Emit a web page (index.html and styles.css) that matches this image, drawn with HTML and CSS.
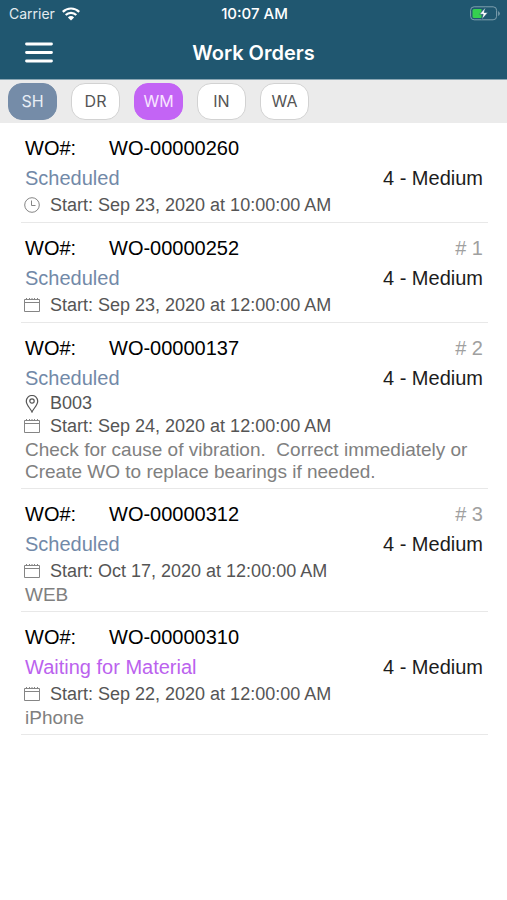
FILE: index.html
```html
<!DOCTYPE html>
<html lang="en">
<head>
<meta charset="utf-8">
<meta name="viewport" content="width=device-width, initial-scale=1">
<title>Work Orders</title>
<link rel="stylesheet" href="styles.css">
</head>
<body>
<svg class="defs" aria-hidden="true">
  <symbol id="calendar" viewBox="0 0 16 16"><path d="M.5 2.500h15v12H.5zM.5 5.500h15" fill="none" stroke="currentColor"/><path d="M2.500 1v2M5.500 1v2M8 1v2M10.500 1v2M13.500 1v2" stroke="currentColor"/></symbol>
  <symbol id="clock" viewBox="0 0 16 16"><circle cx="8" cy="8" r="7.300" fill="none" stroke="currentColor"/><path d="M7.500 3.500v5h4" fill="none" stroke="currentColor"/></symbol>
  <symbol id="pin" viewBox="0 0 16 18"><path d="M8 17C6.500 13.500 2.300 10 2.300 6.200a5.700 5.700 0 0 1 11.400 0C13.700 10 9.500 13.500 8 17z" fill="none" stroke="currentColor" stroke-width="1.200"/><circle cx="8" cy="6" r="2.200" fill="none" stroke="currentColor" stroke-width="1.200"/></symbol>
</svg>
<header class="top">
  <div class="status-bar">
    <span class="carrier">Carrier
      <svg class="wifi" viewBox="0 0 18 14" aria-hidden="true"><g fill="none" stroke="#fff" stroke-width="2.200"><path d="M.8 4.900a11.600 11.600 0 0 1 16.400 0"/><path d="M3.700 8a7.500 7.500 0 0 1 10.600 0"/></g><path d="M9 13.600 5.900 10.400a4.400 4.400 0 0 1 6.200 0z" fill="#fff"/></svg>
    </span>
    <span class="clock">10:07 AM</span>
    <svg class="battery" viewBox="0 0 30 15" aria-hidden="true"><rect x=".6" y=".8" width="26" height="13" rx="3.500" fill="none" stroke="#7fa0af"/><path d="M28.200 5v5q1.600-1 1.600-2.500T28.200 5z" fill="#7fa0af"/><path d="M4 3h7.500v9H4q-1.500 0-1.500-1.500v-6Q2.500 3 4 3z" fill="#35d04f"/><path d="M15.500 1.500 9.500 8.300h3.700L11.800 13.500l6-7h-3.700z" fill="#fff" stroke="#205770" stroke-width=".6"/></svg>
  </div>
  <div class="nav-bar">
    <button class="menu" type="button" aria-label="Menu"><svg viewBox="0 0 28 22" aria-hidden="true"><path d="M1.500 2h25M1.500 10.500h25M1.500 19h25" stroke="#fff" stroke-width="2.800" stroke-linecap="round"/></svg></button>
    <h1 class="title">Work Orders</h1>
  </div>
</header>
<nav class="filters" aria-label="Status filters">
  <button class="chip scheduled-on" type="button" aria-pressed="true">SH</button>
  <button class="chip" type="button" aria-pressed="false">DR</button>
  <button class="chip waiting-on" type="button" aria-pressed="true">WM</button>
  <button class="chip" type="button" aria-pressed="false">IN</button>
  <button class="chip" type="button" aria-pressed="false">WA</button>
</nav>
<main>
  <ul class="orders">
    <li class="order">
      <div class="line"><span class="label">WO#:</span><span>WO-00000260</span></div>
      <div class="line"><span class="scheduled">Scheduled</span><span class="end priority">4 - Medium</span></div>
      <div class="meta"><svg class="icon" aria-hidden="true"><use href="#clock"/></svg>Start: Sep 23, 2020 at 10:00:00 AM</div>
    </li>
    <li class="order">
      <div class="line"><span class="label">WO#:</span><span>WO-00000252</span><span class="end rank"># 1</span></div>
      <div class="line"><span class="scheduled">Scheduled</span><span class="end priority">4 - Medium</span></div>
      <div class="meta"><svg class="icon" aria-hidden="true"><use href="#calendar"/></svg>Start: Sep 23, 2020 at 12:00:00 AM</div>
    </li>
    <li class="order">
      <div class="line"><span class="label">WO#:</span><span>WO-00000137</span><span class="end rank"># 2</span></div>
      <div class="line"><span class="scheduled">Scheduled</span><span class="end priority">4 - Medium</span></div>
      <div class="meta place"><svg class="icon pin" aria-hidden="true"><use href="#pin"/></svg>B003</div>
      <div class="meta"><svg class="icon" aria-hidden="true"><use href="#calendar"/></svg>Start: Sep 24, 2020 at 12:00:00 AM</div>
      <p class="note">Check for cause of vibration.&nbsp; Correct immediately or Create WO to replace bearings if needed.</p>
    </li>
    <li class="order">
      <div class="line"><span class="label">WO#:</span><span>WO-00000312</span><span class="end rank"># 3</span></div>
      <div class="line"><span class="scheduled">Scheduled</span><span class="end priority">4 - Medium</span></div>
      <div class="meta"><svg class="icon" aria-hidden="true"><use href="#calendar"/></svg>Start: Oct 17, 2020 at 12:00:00 AM</div>
      <p class="note">WEB</p>
    </li>
    <li class="order">
      <div class="line"><span class="label">WO#:</span><span>WO-00000310</span></div>
      <div class="line"><span class="waiting">Waiting for Material</span><span class="end priority">4 - Medium</span></div>
      <div class="meta"><svg class="icon" aria-hidden="true"><use href="#calendar"/></svg>Start: Sep 22, 2020 at 12:00:00 AM</div>
      <p class="note">iPhone</p>
    </li>
  </ul>
</main>
</body>
</html>
```
FILE: styles.css
```css
* { box-sizing: border-box; }
body {
  margin: 0;
  background: #fff;
  color: #000;
  font-family: "Liberation Sans", Arial, sans-serif;
  font-size: 20px;
}
.defs { display: none; }
.top {
  background: #205770;
  color: #fff;
  font-family: Inter, sans-serif;
  border-bottom: 1px solid #8aa6b3;
}
.status-bar {
  display: grid;
  grid-template-columns: 1fr auto 1fr;
  align-items: center;
  height: 27px;
  padding: 0 7px 0 9px;
  font-size: 14px;
}
.carrier { display: flex; align-items: center; gap: 7px; color: #e3ebef; }
.wifi { width: 18px; height: 14px; }
.clock { font-size: 15px; font-weight: 500; }
.battery { width: 30px; height: 15px; justify-self: end; }
.nav-bar {
  display: grid;
  grid-template-columns: 1fr auto 1fr;
  align-items: center;
  height: 52px;
  padding: 0 25px;
}
.menu {
  width: 28px;
  height: 22px;
  padding: 0;
  border: 0;
  background: none;
}
.menu svg { display: block; width: 28px; height: 22px; }
.title { margin: 0; font-size: 20px; font-weight: 600; }
.filters {
  display: flex;
  align-items: center;
  gap: 14px;
  height: 43px;
  padding: 0 8px 1px;
  background: #ebebeb;
}
.chip {
  width: 49px;
  height: 37px;
  padding: 0;
  border: 1px solid #d2d2d2;
  border-radius: 14px;
  background: #fff;
  color: #555;
  font: 16px Inter, sans-serif;
}
.scheduled-on { background: #758ca8; border-color: #758ca8; color: #e9eef5; }
.waiting-on { background: #c364f5; border-color: #c364f5; color: #f8e6ff; }
.orders { margin: 0 19px 0 21px; padding: 0; list-style: none; }
.order { padding: 10px 5px 5px 4px; border-bottom: 1px solid #e8e8e8; }
.line { display: flex; line-height: 30px; }
.label { width: 84px; }
.end { margin-left: auto; }
.priority { color: #1c1c1c; }
.rank { color: #a0a0a0; }
.scheduled { color: #7289a8; }
.waiting { color: #bb62ee; }
.meta {
  display: flex;
  align-items: center;
  gap: 10px;
  margin-left: -1px;
  color: #555;
  font-size: 18px;
  line-height: 24px;
}
.place { line-height: 21px; }
.icon { width: 16px; height: 16px; color: #858585; }
.pin { height: 18px; color: #555; }
.note { margin: 1px 0 0; color: #808080; font-size: 19px; line-height: 22px; }
```
